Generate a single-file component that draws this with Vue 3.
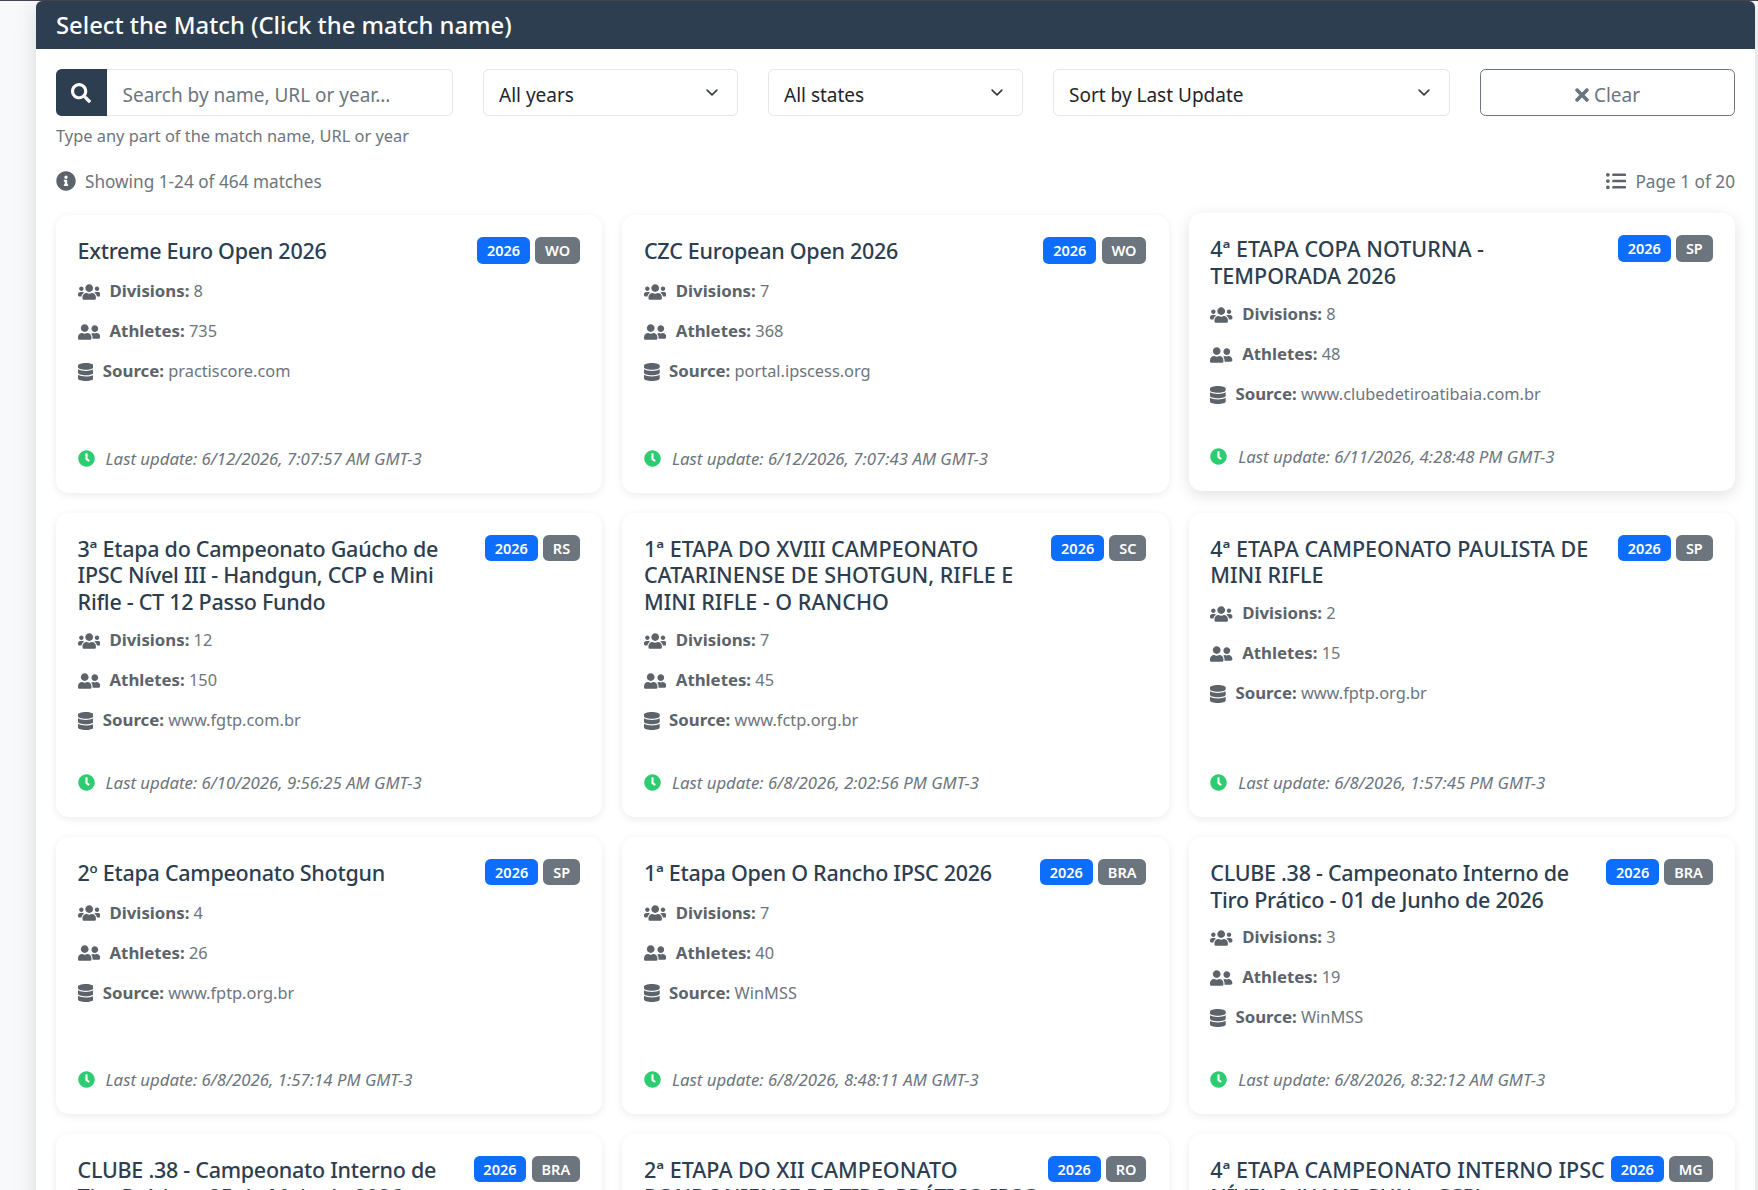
<template>
  <div class="page">
    <div class="top-line"></div>
    <div class="panel">
      <div class="panel-header">Select the Match (Click the match name)</div>
      <div class="panel-body">
        <div class="filters">
          <div>
            <div class="search-group">
              <span class="search-btn">
                <svg class="ico" viewBox="0 0 512 512"><path :d="icons.search" /></svg>
              </span>
              <input class="search-input" type="text" placeholder="Search by name, URL or year..." />
            </div>
            <div class="help">Type any part of the match name, URL or year</div>
          </div>
          <select class="picker"><option>All years</option></select>
          <select class="picker"><option>All states</option></select>
          <select class="picker"><option>Sort by Last Update</option></select>
          <button class="clear-btn">
            <svg class="ico times" viewBox="0 0 352 512"><path :d="icons.times" /></svg>
            Clear
          </button>
        </div>

        <div class="summary">
          <span class="summary-item">
            <svg class="ico info" viewBox="0 0 512 512"><path :d="icons.info" /></svg>
            Showing 1-24 of 464 matches
          </span>
          <span class="summary-item">
            <svg class="ico list" viewBox="0 0 512 512"><path :d="icons.list" /></svg>
            Page 1 of 20
          </span>
        </div>

        <div class="grid">
          <div
            v-for="match in matches"
            :key="match.name"
            :class="['card', { hovered: match.hovered }]"
          >
            <div class="card-top">
              <h5 :class="['card-title', { caps: match.name === match.name.toUpperCase() }]">{{ match.name }}</h5>
              <div class="badges">
                <span class="badge year">2026</span>
                <span class="badge region">{{ match.region }}</span>
              </div>
            </div>
            <div class="stat">
              <svg class="ico wide" viewBox="0 0 640 512"><path :d="icons.users" /></svg>
              <span><b>Divisions:</b> {{ match.divisions }}</span>
            </div>
            <div class="stat">
              <svg class="ico wide" viewBox="0 0 640 512"><path :d="icons.friends" /></svg>
              <span><b>Athletes:</b> {{ match.athletes }}</span>
            </div>
            <div class="stat">
              <svg class="ico narrow" viewBox="0 0 448 512"><path :d="icons.database" /></svg>
              <span><b>Source:</b> {{ match.source }}</span>
            </div>
            <div class="updated">
              <svg class="ico clock" viewBox="0 0 512 512"><path :d="icons.clock" /></svg>
              <em>Last update: {{ match.updated }} GMT-3</em>
            </div>
          </div>
        </div>
      </div>
    </div>
  </div>
</template>

<script setup>
const icons = {
  search: 'M505 442.7L405.3 343c-4.5-4.5-10.6-7-17-7H372c27.6-35.3 44-79.7 44-128C416 93.1 322.9 0 208 0S0 93.1 0 208s93.1 208 208 208c48.3 0 92.7-16.4 128-44v16.3c0 6.4 2.5 12.5 7 17l99.7 99.7c9.4 9.4 24.6 9.4 33.9 0l28.3-28.3c9.4-9.4 9.4-24.6.1-34zM208 336c-70.7 0-128-57.2-128-128 0-70.7 57.2-128 128-128 70.7 0 128 57.2 128 128 0 70.7-57.2 128-128 128z',
  times: 'M242.72 256l100.07-100.07c12.28-12.28 12.28-32.19 0-44.48l-22.24-22.24c-12.28-12.28-32.19-12.28-44.48 0L176 189.28 75.93 89.21c-12.28-12.28-32.19-12.28-44.48 0L9.21 111.45c-12.28 12.28-12.28 32.19 0 44.48L109.28 256 9.21 356.07c-12.28 12.28-12.28 32.19 0 44.48l22.24 22.24c12.28 12.28 32.2 12.28 44.48 0L176 322.72l100.07 100.07c12.28 12.28 32.2 12.28 44.48 0l22.24-22.24c12.28-12.28 12.28-32.19 0-44.48L242.72 256z',
  info: 'M256 8C119.043 8 8 119.083 8 256c0 136.997 111.043 248 248 248s248-111.003 248-248C504 119.083 392.957 8 256 8zm0 110c23.196 0 42 18.804 42 42s-18.804 42-42 42-42-18.804-42-42 18.804-42 42-42zm56 254c0 6.627-5.373 12-12 12h-88c-6.627 0-12-5.373-12-12v-24c0-6.627 5.373-12 12-12h12v-64h-12c-6.627 0-12-5.373-12-12v-24c0-6.627 5.373-12 12-12h64c6.627 0 12 5.373 12 12v100h12c6.627 0 12 5.373 12 12v24z',
  list: 'M48 48a48 48 0 1 0 48 48 48 48 0 0 0-48-48zm0 160a48 48 0 1 0 48 48 48 48 0 0 0-48-48zm0 160a48 48 0 1 0 48 48 48 48 0 0 0-48-48zm448 16H176a16 16 0 0 0-16 16v32a16 16 0 0 0 16 16h320a16 16 0 0 0 16-16v-32a16 16 0 0 0-16-16zm0-320H176a16 16 0 0 0-16 16v32a16 16 0 0 0 16 16h320a16 16 0 0 0 16-16V80a16 16 0 0 0-16-16zm0 160H176a16 16 0 0 0-16 16v32a16 16 0 0 0 16 16h320a16 16 0 0 0 16-16v-32a16 16 0 0 0-16-16z',
  users: 'M96 224c35.3 0 64-28.7 64-64s-28.7-64-64-64-64 28.7-64 64 28.7 64 64 64zm448 0c35.3 0 64-28.7 64-64s-28.7-64-64-64-64 28.7-64 64 28.7 64 64 64zm32 32h-64c-17.6 0-33.5 7.1-45.1 18.6 40.3 22.1 68.9 62 75.1 109.4h66c17.7 0 32-14.3 32-32v-32c0-35.3-28.7-64-64-64zm-256 0c61.9 0 112-50.1 112-112S381.9 32 320 32 208 82.1 208 144s50.1 112 112 112zm76.8 32h-8.3c-20.8 10-43.9 16-68.5 16s-47.6-6-68.5-16h-8.3C179.6 288 128 339.6 128 403.2V432c0 26.5 21.5 48 48 48h288c26.5 0 48-21.5 48-48v-28.8c0-63.6-51.6-115.2-115.2-115.2zm-223.7-13.4C161.5 263.1 145.6 256 128 256H64c-35.3 0-64 28.7-64 64v32c0 17.7 14.3 32 32 32h65.9c6.3-47.4 34.9-87.3 75.2-109.4z',
  friends: 'M192 256c61.9 0 112-50.1 112-112S253.9 32 192 32 80 82.1 80 144s50.1 112 112 112zm76.8 32h-8.3c-20.8 10-43.9 16-68.5 16s-47.6-6-68.5-16h-8.3C51.6 288 0 339.6 0 403.2V432c0 26.5 21.5 48 48 48h288c26.5 0 48-21.5 48-48v-28.8c0-63.6-51.6-115.2-115.2-115.2zM480 256c53 0 96-43 96-96s-43-96-96-96-96 43-96 96 43 96 96 96zm48 32h-3.8c-13.9 4.8-28.6 8-44.2 8s-30.3-3.2-44.2-8H432c-20.4 0-39.2 5.9-55.7 15.4 24.4 26.3 39.7 61.2 39.7 99.8v38.4c0 2.2-.5 4.3-.6 6.4H592c26.5 0 48-21.5 48-48 0-61.9-50.1-112-112-112z',
  database: 'M448 73.143v45.714C448 159.143 347.667 192 224 192S0 159.143 0 118.857V73.143C0 32.857 100.333 0 224 0s224 32.857 224 73.143zM448 176v102.857C448 319.143 347.667 352 224 352S0 319.143 0 278.857V176c48.125 33.143 136.208 48.572 224 48.572S399.874 209.143 448 176zm0 160v102.857C448 479.143 347.667 512 224 512S0 479.143 0 438.857V336c48.125 33.143 136.208 48.572 224 48.572S399.874 369.143 448 336z',
  clock: 'M256,8C119,8,8,119,8,256S119,504,256,504,504,393,504,256,393,8,256,8Zm92.49,313h0l-20,25a16,16,0,0,1-22.49,2.5h0l-67-49.72a40,40,0,0,1-15-31.23V112a16,16,0,0,1,16-16h32a16,16,0,0,1,16,16V256l58,42.5A16,16,0,0,1,348.49,321Z'
}

const matches = [
  { name: 'Extreme Euro Open 2026', region: 'WO', divisions: 8, athletes: 735, source: 'practiscore.com', updated: '6/12/2026, 7:07:57 AM' },
  { name: 'CZC European Open 2026', region: 'WO', divisions: 7, athletes: 368, source: 'portal.ipscess.org', updated: '6/12/2026, 7:07:43 AM' },
  { name: '4ª ETAPA COPA NOTURNA -\nTEMPORADA 2026', region: 'SP', divisions: 8, athletes: 48, source: 'www.clubedetiroatibaia.com.br', updated: '6/11/2026, 4:28:48 PM', hovered: true },
  { name: '3ª Etapa do Campeonato Gaúcho de IPSC Nível III - Handgun, CCP e Mini Rifle - CT 12 Passo Fundo', region: 'RS', divisions: 12, athletes: 150, source: 'www.fgtp.com.br', updated: '6/10/2026, 9:56:25 AM' },
  { name: '1ª ETAPA DO XVIII CAMPEONATO CATARINENSE DE SHOTGUN, RIFLE E MINI RIFLE - O RANCHO', region: 'SC', divisions: 7, athletes: 45, source: 'www.fctp.org.br', updated: '6/8/2026, 2:02:56 PM' },
  { name: '4ª ETAPA CAMPEONATO PAULISTA DE MINI RIFLE', region: 'SP', divisions: 2, athletes: 15, source: 'www.fptp.org.br', updated: '6/8/2026, 1:57:45 PM' },
  { name: '2º Etapa Campeonato Shotgun', region: 'SP', divisions: 4, athletes: 26, source: 'www.fptp.org.br', updated: '6/8/2026, 1:57:14 PM' },
  { name: '1ª Etapa Open O Rancho IPSC 2026', region: 'BRA', divisions: 7, athletes: 40, source: 'WinMSS', updated: '6/8/2026, 8:48:11 AM' },
  { name: 'CLUBE .38 - Campeonato Interno de Tiro Prático - 01 de Junho de 2026', region: 'BRA', divisions: 3, athletes: 19, source: 'WinMSS', updated: '6/8/2026, 8:32:12 AM' },
  { name: 'CLUBE .38 - Campeonato Interno de Tiro Prático - 25 de Maio de 2026', region: 'BRA', divisions: 3, athletes: 22, source: 'WinMSS', updated: '6/8/2026, 8:30:02 AM' },
  { name: '2ª ETAPA DO XII CAMPEONATO RONDONIENSE DE TIRO PRÁTICO IPSC', region: 'RO', divisions: 5, athletes: 60, source: 'WinMSS', updated: '6/7/2026, 6:12:40 PM' },
  { name: '4ª ETAPA CAMPEONATO INTERNO IPSC NÍVEL 0 (HANDGUN + CCP)', region: 'MG', divisions: 4, athletes: 31, source: 'WinMSS', updated: '6/7/2026, 5:40:18 PM' }
]
</script>

<style>
html,
body {
  margin: 0;
  height: 1190px;
  overflow: hidden;
  background: #f7f9fb;
}
</style>

<style scoped>
.page {
  height: 1190px;
  overflow: hidden;
  font-family: "Noto Sans", "Open Sans", sans-serif;
  font-size: 17.2px;
  color: #6c757d;
}

.top-line {
  height: 1px;
  background: #4a4352;
}

.panel {
  margin: 0 3px 0 36px;
  background: #fff;
  border-radius: 6px 6px 0 0;
  box-shadow: 0 4px 24px rgba(0, 0, 0, 0.12);
}

.panel-header {
  background: #2c3e50;
  color: #fff;
  height: 48px;
  line-height: 48px;
  padding: 0 20px;
  font-size: 23.8px;
  font-weight: 500;
  border-radius: 6px 6px 0 0;
}

.panel-body {
  padding: 20px;
}

.filters {
  display: grid;
  grid-template-columns: 397fr 255fr 255fr 397fr 255fr;
  column-gap: 30px;
  align-items: start;
  font-size: 19px;
}

.search-group {
  display: flex;
  height: 47.4px;
}

.search-btn {
  width: 50.5px;
  flex: none;
  display: flex;
  align-items: center;
  justify-content: center;
  background: #2c3e50;
  color: #fff;
  border-radius: 5.6px 0 0 5.6px;
}

.search-btn .ico {
  width: 20px;
  height: 20px;
}

.search-input {
  flex: 1;
  min-width: 0;
  border: 1.5px solid #e3e6ea;
  border-left: none;
  border-radius: 0 5.6px 5.6px 0;
  padding: 4px 15px 0 16px;
  font: inherit;
  color: #495057;
  outline: none;
}

.search-input::placeholder {
  color: #6c757d;
}

.help {
  margin-top: 7px;
  font-size: 16.4px;
  line-height: 26px;
}

.picker {
  height: 47.4px;
  border: 1.5px solid #e3e6ea;
  border-radius: 5.6px;
  padding: 4px 40px 0 15px;
  font: inherit;
  color: #212529;
  background: #fff url("data:image/svg+xml,%3csvg xmlns='http://www.w3.org/2000/svg' viewBox='0 0 16 16'%3e%3cpath fill='none' stroke='%23343a40' stroke-linecap='round' stroke-linejoin='round' stroke-width='2' d='m2 5 6 6 6-6'/%3e%3c/svg%3e") no-repeat right 17px center / 16px 13px;
  appearance: none;
  outline: none;
}

.clear-btn {
  height: 47.4px;
  padding-top: 5px;
  border: 1.2px solid #6c757d;
  border-radius: 5.6px;
  background: #fff;
  color: #6c757d;
  font: inherit;
  display: flex;
  align-items: center;
  justify-content: center;
  gap: 5px;
}

.ico {
  fill: currentColor;
  display: block;
  flex: none;
}

.times {
  width: 14px;
  height: 20px;
}

.summary {
  display: flex;
  justify-content: space-between;
  align-items: center;
  margin-top: 19px;
  height: 26px;
}

.summary-item {
  display: flex;
  align-items: center;
  gap: 9px;
}

.info {
  width: 20px;
  height: 20px;
  color: #5c636a;
}

.list {
  width: 20px;
  height: 20px;
  color: #5c636a;
}

.grid {
  display: grid;
  grid-template-columns: repeat(3, 1fr);
  gap: 20px;
  margin-top: 21px;
}

.card {
  display: flex;
  flex-direction: column;
  padding: 22px 22.4px 22px 21.6px;
  border-radius: 13px;
  background: #fff;
  box-shadow: 0 2px 8px rgba(0, 0, 0, 0.08);
}

.card.hovered {
  transform: translateY(-2px);
  box-shadow: 0 4px 16px rgba(0, 0, 0, 0.12);
}

.card-top {
  display: flex;
  justify-content: space-between;
  align-items: flex-start;
  gap: 5px;
  min-height: 30px;
  margin-bottom: 11px;
}

.card-title {
  margin: 0;
  padding-top: 1px;
  font-size: 21.5px;
  line-height: 26.88px;
  letter-spacing: -0.27px;
  font-weight: 500;
  color: #2c3e50;
  white-space: pre-line;
}

.card-title.caps {
  letter-spacing: 0.01px;
}

.badges {
  display: flex;
  gap: 5.4px;
  flex: none;
}

.badge {
  height: 26.5px;
  line-height: 26.5px;
  padding: 0 9.8px;
  border-radius: 5.6px;
  color: #fff;
  font-size: 14.5px;
  font-weight: 600;
}

.year {
  background: #0d6efd;
}

.region {
  background: #6c757d;
}

.stat {
  display: flex;
  align-items: center;
  gap: 9.5px;
  line-height: 26.88px;
  margin-bottom: 13.12px;
  font-size: 16.35px;
}

.stat b {
  font-size: 16.8px;
  font-weight: 700;
  color: #5c636a;
}

.wide {
  width: 22.4px;
  height: 18px;
  color: #5c636a;
}

.narrow {
  width: 15.7px;
  height: 18px;
  color: #5c636a;
}

.updated {
  display: flex;
  align-items: center;
  gap: 11px;
  margin-top: auto;
  padding-top: 23.5px;
  line-height: 24px;
  font-size: 16.8px;
}

.clock {
  width: 17px;
  height: 17px;
  color: #2ecc71;
}
</style>
